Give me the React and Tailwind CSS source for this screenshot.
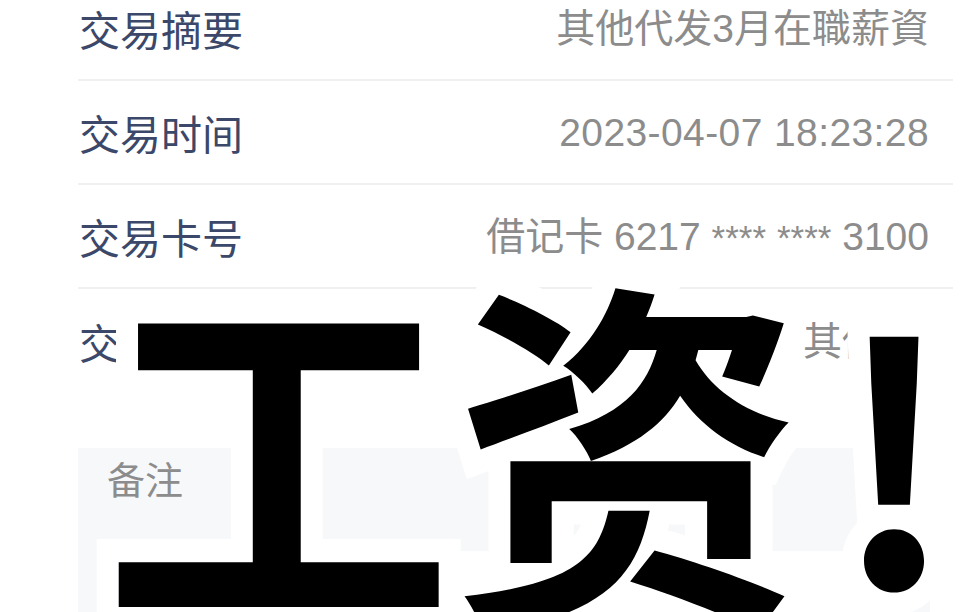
import React from 'react';

const rows = [
  { label: '交易摘要', value: '其他代发3月在職薪資', cls: '' },
  { label: '交易时间', value: '2023-04-07 18:23:28', cls: 'tracking-[0.4px]' },
  {
    label: '交易卡号',
    value: (
      <>
        借记卡 6217 <span className="text-[35px]">****</span> <span className="text-[35px]">****</span> 3100
      </>
    ),
    cls: ''
  },
  { label: '交易类型', value: '其他类', cls: 'mr-[9px]' }
];

const Outlined = ({ children, className }) => (
  <div className={`relative ${className}`}>
    <span className="absolute left-0 top-0 text-white [-webkit-text-stroke:44px_white]">{children}</span>
    <span className="relative text-black">{children}</span>
  </div>
);

const App = () => {
  return (
    <div className="relative h-[612px] w-[980px] overflow-hidden bg-white font-['Noto_Sans_CJK_SC',sans-serif]">
      <div className="-mt-[23px] ml-[78px] w-[875px]">
        {rows.map((row, i) => (
          <div
            key={row.label}
            className={`flex h-[104px] items-center justify-between pr-[24px] ${i < rows.length - 1 ? 'border-b-2 border-[#f0f0f0]' : ''}`}
          >
            <span className="pl-[1px] text-[41px] leading-none text-[#3c4869]">{row.label}</span>
            <span className={`font-['Liberation_Sans','Noto_Sans_CJK_SC',sans-serif] text-[39px] leading-none text-[#8c8c8c] ${row.cls}`}>
              {row.value}
            </span>
          </div>
        ))}
      </div>

      <div className="ml-[78px] mt-[55px] w-[852px] bg-[#f7f8fa] px-[22px] pt-[11px]">
        <div className="pl-[7px] text-[38px] leading-[38px] text-[#8c8c8c]">备注</div>
        <div className="mt-[54px] h-[140px] rounded-[20px] bg-white"></div>
      </div>

      <div className="pointer-events-none absolute left-[103px] top-[254px] flex items-baseline font-bold leading-none">
        <Outlined className="origin-top scale-y-[1.057] text-[350px]">工资</Outlined>
        <Outlined className="top-[7px] ml-[30px] text-[330px]">!</Outlined>
      </div>
    </div>
  );
};

export default App;
